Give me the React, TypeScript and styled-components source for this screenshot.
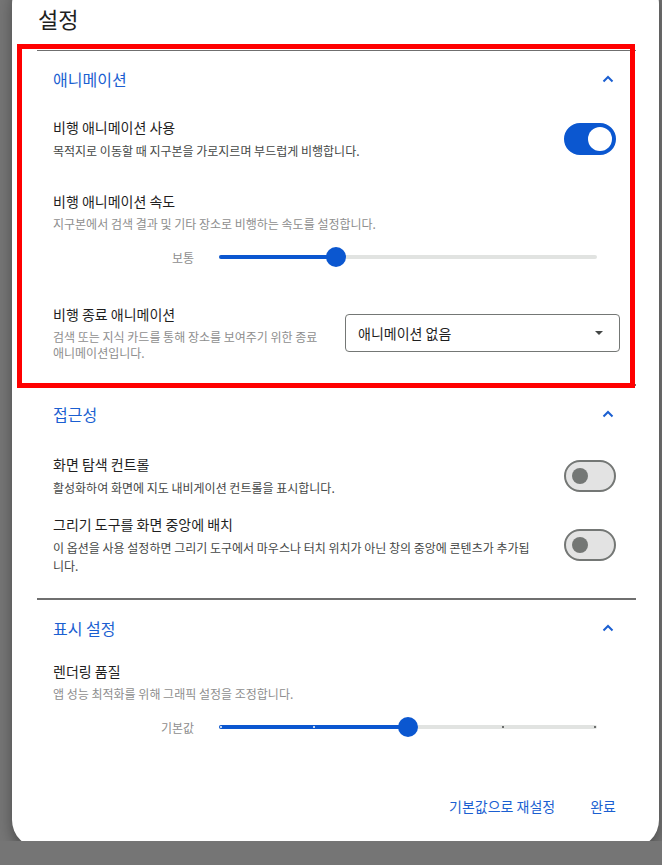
import styled, { createGlobalStyle } from 'styled-components';

const BLUE = '#0b57d0';
const LINK = '#1b5fd1';

const GlobalStyle = createGlobalStyle`
  html, body {
    margin: 0;
    padding: 0;
    background: #757575;
    overflow: hidden;
  }
  body {
    font-family: "Noto Sans CJK KR", "Noto Sans", sans-serif;
  }
  * {
    box-sizing: border-box;
  }
`;

const Page = styled.div`
  height: 865px;
  padding-left: 12px;
`;

const Dialog = styled.div`
  width: 647px;
  margin-top: -24px;
  padding: 26px 23px 24px 25px;
  background: #ffffff;
  border-radius: 28px;
  box-shadow: 0 6px 14px rgba(0, 0, 0, 0.35);
`;

const Title = styled.h1`
  margin: 0 0 16px 1px;
  font-size: 22px;
  line-height: 32px;
  font-weight: 400;
  color: #1f1f1f;
`;

const Section = styled.section<{ $first?: boolean; $last?: boolean }>`
  position: relative;
  border-top: ${({ $first }) => ($first ? '1px solid #6f6f6f' : 'none')};
  border-bottom: ${({ $last }) => ($last ? 'none' : '2px solid #6f6f6f')};
`;

const RedFrame = styled.div`
  position: absolute;
  left: -20px;
  top: -7px;
  right: 1px;
  bottom: -4px;
  border: 5px solid #ff0000;
  pointer-events: none;
  z-index: 2;
`;

const SectionHeader = styled.div`
  display: flex;
  align-items: center;
  justify-content: space-between;
  height: 56px;
  padding: 0 20px 0 16px;
  font-size: 16px;
  color: ${LINK};
`;

const SectionBody = styled.div<{ $top: number; $bottom: number; $gap: number }>`
  display: flex;
  flex-direction: column;
  gap: ${({ $gap }) => $gap}px;
  padding: ${({ $top, $bottom }) => `${$top}px 20px ${$bottom}px 16px`};
`;

const Row = styled.div`
  display: flex;
  align-items: center;
  gap: 24px;
`;

const TextBlock = styled.div`
  flex: 1;
  min-width: 0;
`;

const ItemTitle = styled.div`
  font-size: 14px;
  line-height: 20px;
  color: #1f1f1f;
`;

const ItemDesc = styled.div<{ $muted?: boolean }>`
  margin-top: 5px;
  font-size: 12px;
  line-height: ${({ $muted }) => ($muted ? 16 : 18)}px;
  color: ${({ $muted }) => ($muted ? '#8e8e8e' : '#444746')};
`;

const Toggle = styled.button<{ $on: boolean }>`
  flex-shrink: 0;
  display: flex;
  align-items: center;
  justify-content: ${({ $on }) => ($on ? 'flex-end' : 'flex-start')};
  width: 52px;
  height: 32px;
  padding: ${({ $on }) => ($on ? '0 2px' : '0 6px')};
  border-radius: 16px;
  border: 2px solid ${({ $on }) => ($on ? BLUE : '#747775')};
  background: ${({ $on }) => ($on ? BLUE : '#e3e3e3')};
  cursor: pointer;
`;

const ToggleThumb = styled.span<{ $on: boolean }>`
  width: ${({ $on }) => ($on ? 24 : 16)}px;
  height: ${({ $on }) => ($on ? 24 : 16)}px;
  border-radius: 50%;
  background: ${({ $on }) => ($on ? '#ffffff' : '#747775')};
`;

const SliderRow = styled.div`
  display: flex;
  align-items: center;
  height: 32px;
  margin-top: 9px;
  padding-right: 19px;
`;

const SliderLabel = styled.span`
  width: 141px;
  margin-right: 25px;
  text-align: right;
  font-size: 12px;
  color: #8e8e8e;
`;

const Track = styled.div`
  position: relative;
  flex: 1;
  height: 4px;
  border-radius: 2px;
  background: #e1e3e1;
`;

const ActiveTrack = styled.div`
  position: absolute;
  left: 0;
  top: 0;
  bottom: 0;
  border-radius: 2px;
  background: ${BLUE};
`;

const Tick = styled.span<{ $active: boolean }>`
  position: absolute;
  top: 1px;
  width: 2px;
  height: 2px;
  margin-left: -1px;
  border-radius: 50%;
  background: ${({ $active }) => ($active ? '#ffffff' : '#444746')};
`;

const Thumb = styled.span`
  position: absolute;
  top: 50%;
  width: 20px;
  height: 20px;
  border-radius: 50%;
  background: ${BLUE};
  transform: translate(-50%, -50%);
`;

const Select = styled.div`
  flex-shrink: 0;
  display: flex;
  align-items: center;
  justify-content: space-between;
  width: 275px;
  height: 38px;
  margin-right: -4px;
  padding: 0 16px 0 12px;
  border: 1px solid #747775;
  border-radius: 4px;
  font-size: 14px;
  color: #1f1f1f;
`;

const Footer = styled.div`
  display: flex;
  justify-content: flex-end;
  gap: 11px;
  padding-right: 8px;
`;

const TextButton = styled.button`
  height: 36px;
  padding: 0 12px;
  border: none;
  background: none;
  font-family: inherit;
  font-size: 14px;
  color: ${LINK};
  cursor: pointer;
`;

function Chevron() {
  return (
    <svg width="16" height="16" viewBox="0 0 16 16" aria-hidden>
      <polyline
        points="3.5,10.5 8,6 12.5,10.5"
        fill="none"
        stroke={LINK}
        strokeWidth="2"
      />
    </svg>
  );
}

function Slider({
  label,
  value,
  ticks,
}: {
  label: string;
  value: number;
  ticks?: number[];
}) {
  return (
    <SliderRow>
      <SliderLabel>{label}</SliderLabel>
      <Track>
        <ActiveTrack style={{ width: `${value}%` }} />
        {ticks?.map((t) => (
          <Tick key={t} $active={t <= value} style={{ left: `${t}%` }} />
        ))}
        <Thumb style={{ left: `${value}%` }} />
      </Track>
    </SliderRow>
  );
}

function Switch({ on }: { on: boolean }) {
  return (
    <Toggle type="button" $on={on} aria-pressed={on}>
      <ToggleThumb $on={on} />
    </Toggle>
  );
}

export default function App() {
  return (
    <Page>
      <GlobalStyle />
      <Dialog>
        <Title>설정</Title>

        <Section $first>
          <RedFrame />
          <SectionHeader>
            애니메이션
            <Chevron />
          </SectionHeader>
          <SectionBody $top={10} $bottom={23} $gap={31}>
            <Row>
              <TextBlock>
                <ItemTitle>비행 애니메이션 사용</ItemTitle>
                <ItemDesc>목적지로 이동할 때 지구본을 가로지르며 부드럽게 비행합니다.</ItemDesc>
              </TextBlock>
              <Switch on />
            </Row>
            <div>
              <ItemTitle>비행 애니메이션 속도</ItemTitle>
              <ItemDesc $muted>지구본에서 검색 결과 및 기타 장소로 비행하는 속도를 설정합니다.</ItemDesc>
              <Slider label="보통" value={31} />
            </div>
            <Row>
              <TextBlock>
                <ItemTitle>비행 종료 애니메이션</ItemTitle>
                <ItemDesc $muted>
                  검색 또는 지식 카드를 통해 장소를 보여주기 위한 종료 애니메이션입니다.
                </ItemDesc>
              </TextBlock>
              <Select>
                애니메이션 없음
                <svg width="8" height="4" viewBox="0 0 8 4" aria-hidden>
                  <polygon points="0,0 8,0 4,4" fill="#444746" />
                </svg>
              </Select>
            </Row>
          </SectionBody>
        </Section>

        <Section>
          <SectionHeader>
            접근성
            <Chevron />
          </SectionHeader>
          <SectionBody $top={12} $bottom={23} $gap={17}>
            <Row>
              <TextBlock>
                <ItemTitle>화면 탐색 컨트롤</ItemTitle>
                <ItemDesc>활성화하여 화면에 지도 내비게이션 컨트롤을 표시합니다.</ItemDesc>
              </TextBlock>
              <Switch on={false} />
            </Row>
            <Row>
              <TextBlock>
                <ItemTitle>그리기 도구를 화면 중앙에 배치</ItemTitle>
                <ItemDesc>
                  이 옵션을 사용 설정하면 그리기 도구에서 마우스나 터치 위치가 아닌 창의 중앙에 콘텐츠가 추가됩니다.
                </ItemDesc>
              </TextBlock>
              <Switch on={false} />
            </Row>
          </SectionBody>
        </Section>

        <Section $last>
          <SectionHeader>
            표시 설정
            <Chevron />
          </SectionHeader>
          <SectionBody $top={5} $bottom={45} $gap={0}>
            <div>
              <ItemTitle>렌더링 품질</ItemTitle>
              <ItemDesc $muted>앱 성능 최적화를 위해 그래픽 설정을 조정합니다.</ItemDesc>
              <Slider label="기본값" value={50} ticks={[0.5, 25, 50, 75, 99.5]} />
            </div>
          </SectionBody>
        </Section>

        <Footer>
          <TextButton type="button">기본값으로 재설정</TextButton>
          <TextButton type="button">완료</TextButton>
        </Footer>
      </Dialog>
    </Page>
  );
}
